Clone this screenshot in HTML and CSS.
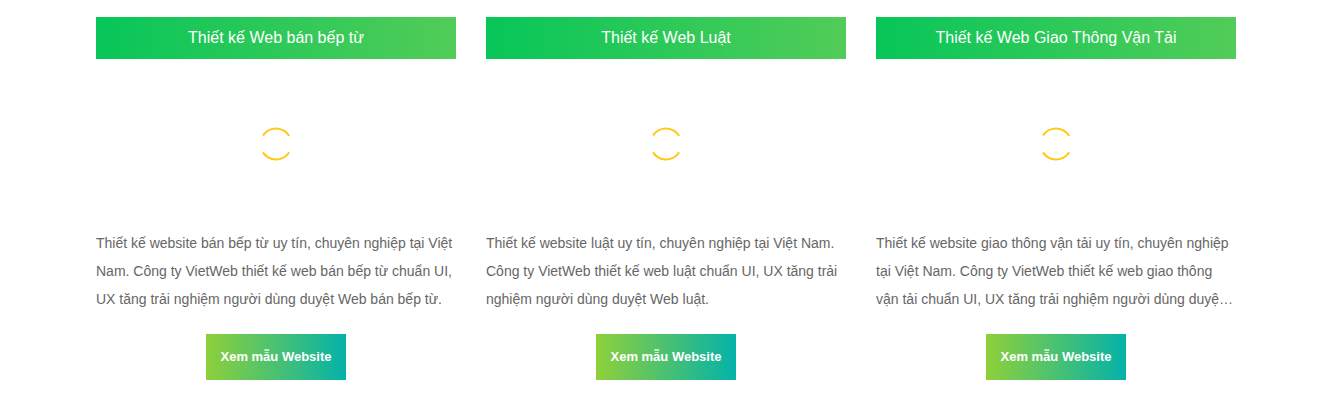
FILE: index.html
```html
<!DOCTYPE html>
<html lang="vi">

<head>
    <meta charset="UTF-8">
    <meta name="viewport" content="width=device-width, initial-scale=1.0">
    <title>Mẫu Website</title>
    <link rel="stylesheet" href="styles.css">
</head>

<body>
    <div class="container">
        <!-- Card: bếp từ -->
        <div class="card">
            <h3 class="card-title">Thiết kế Web bán bếp từ</h3>
            <div class="card-image">
                <svg class="spinner" width="34" height="34" viewBox="0 0 34 34">
                    <circle cx="17" cy="17" r="15.5" />
                </svg>
            </div>
            <p class="card-desc">Thiết kế website bán bếp từ uy tín, chuyên nghiệp tại Việt Nam. Công ty VietWeb thiết kế web bán bếp từ chuẩn UI, UX tăng trải nghiệm người dùng duyệt Web bán bếp từ.</p>
            <a class="view-button" href="#">Xem mẫu Website</a>
        </div>

        <!-- Card: luật -->
        <div class="card">
            <h3 class="card-title">Thiết kế Web Luật</h3>
            <div class="card-image">
                <svg class="spinner" width="34" height="34" viewBox="0 0 34 34">
                    <circle cx="17" cy="17" r="15.5" />
                </svg>
            </div>
            <p class="card-desc">Thiết kế website luật uy tín, chuyên nghiệp tại Việt Nam. Công ty VietWeb thiết kế web luật chuẩn UI, UX tăng trải nghiệm người dùng duyệt Web luật.</p>
            <a class="view-button" href="#">Xem mẫu Website</a>
        </div>

        <!-- Card: giao thông vận tải (text clamped to 3 lines, ends in "…" as in the original) -->
        <div class="card">
            <h3 class="card-title">Thiết kế Web Giao Thông Vận Tải</h3>
            <div class="card-image">
                <svg class="spinner" width="34" height="34" viewBox="0 0 34 34">
                    <circle cx="17" cy="17" r="15.5" />
                </svg>
            </div>
            <p class="card-desc">Thiết kế website giao thông vận tải uy tín, chuyên nghiệp tại Việt Nam. Công ty VietWeb thiết kế web giao thông vận tải chuẩn UI, UX tăng trải nghiệm người dùng duyệt Web giao thông vận tải.</p>
            <a class="view-button" href="#">Xem mẫu Website</a>
        </div>
    </div>
</body>

</html>
```

FILE: styles.css
```css
body {
    font-family: Arial, "Liberation Sans", sans-serif;
    margin: 0;
    padding: 0;
    background-color: #fff;
    color: #666;
}

.container {
    display: grid;
    grid-template-columns: repeat(3, 360px);
    column-gap: 30px;
    padding: 17px 0 0 96px;
}

.card {
    display: flex;
    flex-direction: column;
}

.card-title {
    margin: 0;
    height: 42px;
    line-height: 42px;
    text-align: center;
    font-size: 16px;
    font-weight: normal;
    color: #fff;
    background: linear-gradient(to right, #07c659, #52cc58);
}

.card-image {
    height: 170px;
    display: flex;
    align-items: center;
    justify-content: center;
}

.spinner circle {
    fill: none;
    stroke: #ffc813;
    stroke-width: 2;
    stroke-dasharray: 31 17.7;
    transform: rotate(32deg);
    transform-origin: 17px 17px;
}

.card-desc {
    margin: 0;
    font-size: 14px;
    line-height: 28px;
    height: 84px;
    color: #666;
    display: -webkit-box;
    -webkit-line-clamp: 3;
    -webkit-box-orient: vertical;
    overflow: hidden;
}

.view-button {
    align-self: center;
    margin-top: 21px;
    width: 140px;
    height: 46px;
    line-height: 46px;
    text-align: center;
    font-size: 13px;
    font-weight: bold;
    color: #fff;
    text-decoration: none;
    background: linear-gradient(to right, #8fd03a, #04b2a9);
}
```
